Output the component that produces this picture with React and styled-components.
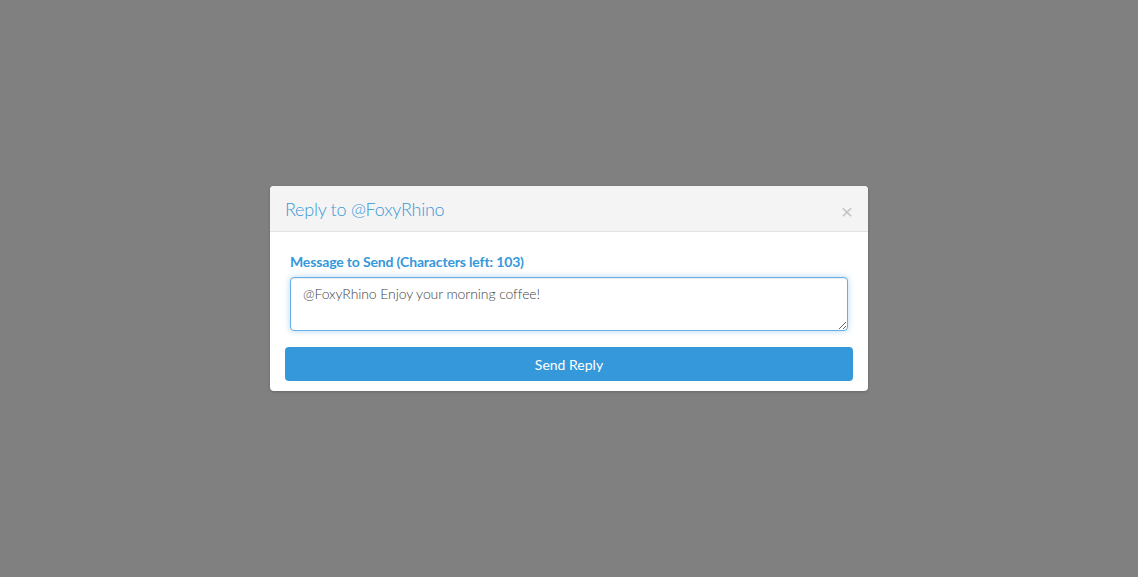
import React from "react";
import styled, { createGlobalStyle } from "styled-components";

const GlobalStyle = createGlobalStyle`
  html, body {
    margin: 0;
    padding: 0;
  }
  body {
    font-family: Lato, "Open Sans", "Liberation Sans", sans-serif;
  }
`;

const Backdrop = styled.div`
  width: 100vw;
  height: 100vh;
  background-color: #808080;
  display: flex;
  align-items: center;
  justify-content: center;
`;

const Modal = styled.div`
  width: 598px;
  background-color: #fff;
  border-radius: 4px;
  overflow: hidden;
  box-shadow: 0 1px 3px rgba(0, 0, 0, 0.2);
`;

const Header = styled.div`
  height: 46px;
  box-sizing: border-box;
  padding: 0 15px;
  display: flex;
  align-items: center;
  justify-content: space-between;
  background-color: #f4f4f4;
  border-bottom: 1px solid #e3e3e3;
`;

const Title = styled.h4`
  margin: 0;
  font-size: 18px;
  font-weight: 300;
  color: #3a98d8;
  letter-spacing: -0.25px;
`;

const Close = styled.button`
  border: none;
  background: transparent;
  padding: 0;
  margin-top: 6px;
  font-family: "Liberation Sans", Arial, sans-serif;
  font-size: 21px;
  line-height: 1;
  font-weight: 400;
  color: #000;
  opacity: 0.2;
  cursor: pointer;
`;

const Body = styled.div`
  padding: 20px 15px 10px;
`;

const FormGroup = styled.div`
  padding: 0 5px;
  margin-bottom: 16px;
`;

const Label = styled.label`
  display: block;
  font-size: 14px;
  line-height: 20px;
  font-weight: 700;
  color: #3498db;
  letter-spacing: -0.15px;
  margin-bottom: 5px;
`;

const TextArea = styled.textarea`
  display: block;
  width: 100%;
  height: 54px;
  box-sizing: border-box;
  padding: 6px 12px;
  font-family: Lato, "Open Sans", sans-serif;
  font-size: 14px;
  font-weight: 300;
  color: #444;
  line-height: 20px;
  letter-spacing: -0.1px;
  border: 1px solid #66afe9;
  border-radius: 4px;
  outline: none;
  resize: vertical;
  box-shadow: inset 0 1px 1px rgba(0, 0, 0, 0.075),
    0 0 6px rgba(102, 175, 233, 0.5);
`;

const Button = styled.button`
  display: block;
  width: 100%;
  height: 34px;
  border: none;
  border-radius: 4px;
  background-color: #3498db;
  color: #fff;
  font-family: Lato, "Open Sans", sans-serif;
  font-size: 14px;
  font-weight: 400;
  cursor: pointer;
`;

const App = () => {
  return (
    <>
      <GlobalStyle />
      <Backdrop>
        <Modal>
          <Header>
            <Title>Reply to @FoxyRhino</Title>
            <Close aria-label="Close">×</Close>
          </Header>
          <Body>
            <FormGroup>
              <Label>Message to Send (Characters left: 103)</Label>
              <TextArea defaultValue="@FoxyRhino Enjoy your morning coffee!" />
            </FormGroup>
            <Button>Send Reply</Button>
          </Body>
        </Modal>
      </Backdrop>
    </>
  );
};

export default App;
